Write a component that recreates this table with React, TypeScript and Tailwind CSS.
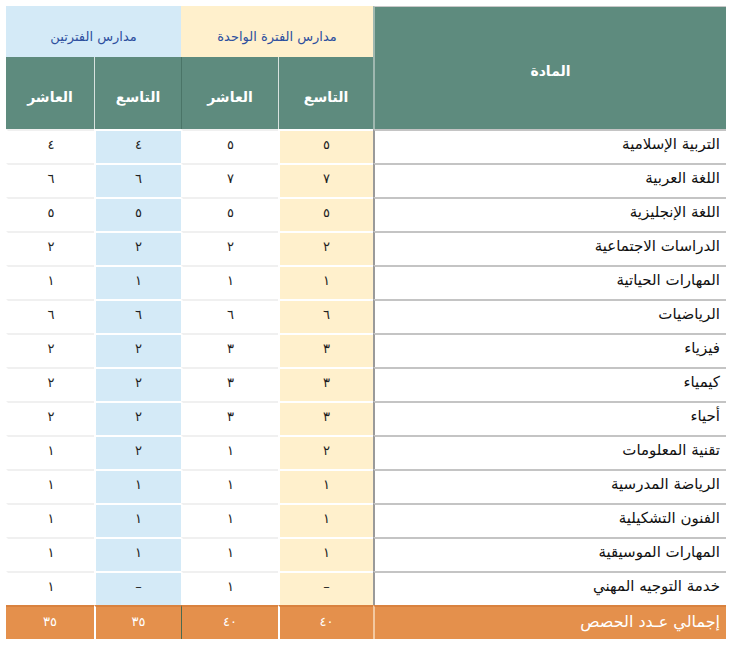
import React from "react";

const rows: [string, string, string, string, string][] = [
  ["التربية الإسلامية", "٥", "٥", "٤", "٤"],
  ["اللغة العربية", "٧", "٧", "٦", "٦"],
  ["اللغة الإنجليزية", "٥", "٥", "٥", "٥"],
  ["الدراسات الاجتماعية", "٢", "٢", "٢", "٢"],
  ["المهارات الحياتية", "١", "١", "١", "١"],
  ["الرياضيات", "٦", "٦", "٦", "٦"],
  ["فيزياء", "٣", "٣", "٢", "٢"],
  ["كيمياء", "٣", "٣", "٢", "٢"],
  ["أحياء", "٣", "٣", "٢", "٢"],
  ["تقنية المعلومات", "٢", "١", "٢", "١"],
  ["الرياضة المدرسية", "١", "١", "١", "١"],
  ["الفنون التشكيلية", "١", "١", "١", "١"],
  ["المهارات الموسيقية", "١", "١", "١", "١"],
  ["خدمة التوجيه المهني", "–", "١", "–", "١"],
];

const numBg = ["bg-[#fff0cc]", "bg-white", "bg-[#d4eaf7]", "bg-white"];

export default function App() {
  return (
    <div className="min-h-[655px] w-[739px] bg-white pl-[6px] pt-[6px] font-['DejaVu_Sans',sans-serif]">
      <div
        dir="rtl"
        className="grid w-[720px] grid-cols-[353px_95px_97px_87px_88px] grid-rows-[51px_72px] auto-rows-[34px]"
      >
        {/* subject header */}
        <div className="row-span-2 flex items-center justify-center border-t border-l-2 border-t-[#c8c8c8] border-l-[#9fb8b0] bg-[#5e8b7e] pt-[6px] text-[14px] font-bold text-white">
          المادة
        </div>
        <div className="col-span-2 flex items-center justify-center bg-[#fff0cc] pt-[10px] text-[13px] text-[#2d4f9e]">
          مدارس الفترة الواحدة
        </div>
        <div className="col-span-2 flex items-center justify-center bg-[#d4eaf7] pt-[10px] text-[13px] text-[#2d4f9e]">
          مدارس الفترتين
        </div>
        {["التاسع", "العاشر", "التاسع", "العاشر"].map((t, i) => (
          <div
            key={i}
            className={
              "flex items-center justify-center bg-[#5e8b7e] pt-[8px] text-[14px] font-bold text-white " +
              (i === 1 ? "border-l border-l-[#4a7467]" : i < 3 ? "border-l border-l-[#d8e2df]" : "")
            }
          >
            {t}
          </div>
        ))}

        {rows.map((r) => (
          <React.Fragment key={r[0]}>
            <div className="flex items-center border-t-2 border-l-2 border-t-[#c4c4c4] border-l-[#9a9a9a] bg-white pb-[5px] pr-[6px] text-[15px] text-[#111]">
              {r[0]}
            </div>
            {r.slice(1).map((v, i) => (
              <div
                key={i}
                className={
                  "flex items-center justify-center border-t-2 border-l-2 pb-[5px] text-[13px] text-[#222] " +
                  numBg[i] +
                  (i === 0 || i === 2 ? " border-t-white border-l-white" : " border-t-[#f0f0f0] border-l-white")
                }
              >
                {v}
              </div>
            ))}
          </React.Fragment>
        ))}

        {/* totals */}
        <div className="flex items-center border-t-2 border-l-2 border-t-[#d9823f] border-l-[#f3c8a0] bg-[#e4904c] pb-[2px] pr-[6px] text-[16px] text-white">
          إجمالي عـدد الحصص
        </div>
        {["٤٠", "٤٠", "٣٥", "٣٥"].map((v, i) => (
          <div
            key={i}
            className={
              "flex items-center justify-center border-t-2 border-t-[#d9823f] bg-[#e4904c] pb-[2px] text-[13px] text-white " +
              (i === 1 ? "border-l border-l-[#4a6a50]" : i < 3 ? "border-l-2 border-l-white" : "")
            }
          >
            {v}
          </div>
        ))}
      </div>
    </div>
  );
}
